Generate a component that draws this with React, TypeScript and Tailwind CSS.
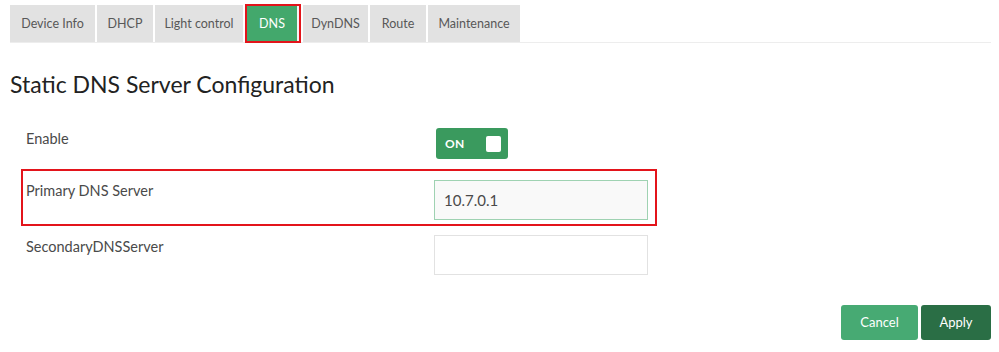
import { FC } from 'react';

const tabs = [
  { label: 'Device Info', w: 'w-[85px]' },
  { label: 'DHCP', w: 'w-[56px]' },
  { label: 'Light control', w: 'w-[88px]' },
  { label: 'DNS', w: 'w-[56px]', active: true },
  { label: 'DynDNS', w: 'w-[65px]' },
  { label: 'Route', w: 'w-[56px]' },
  { label: 'Maintenance', w: 'w-[92px]' },
];

const Tabs: FC = () => (
  <div className="flex gap-[2px] pt-[4px] border-b border-[#ededed] w-[981px]">
    {tabs.map((t) =>
      t.active ? (
        <div
          key={t.label}
          className={`${t.w} h-[39px] -mb-[1px] border-2 border-[#e3141b] flex`}
        >
          <div className="flex-1 bg-[#43a86c] border-r-2 border-[#f4f4f4] flex items-center justify-center pt-[2px] text-[12.5px] text-white">
            {t.label}
          </div>
        </div>
      ) : (
        <div
          key={t.label}
          className={`${t.w} h-[37px] mt-[1px] bg-[#e2e2e2] flex items-center justify-center pt-[2px] text-[12.5px] text-[#585858]`}
        >
          {t.label}
        </div>
      )
    )}
  </div>
);

const Toggle: FC = () => (
  <div className="w-[72px] h-[31px] rounded-[3px] bg-[#3a9a5e] flex items-center justify-between pl-[9px] pr-[7px]">
    <span className="text-[12px] font-bold text-white tracking-wide">ON</span>
    <span className="w-[15px] h-[16px] rounded-[2px] bg-white" />
  </div>
);

export default function App() {
  return (
    <div
      className="w-[999px] h-[352px] bg-white pl-[10px] overflow-hidden"
      style={{ fontFamily: 'Lato, "Open Sans", "Liberation Sans", sans-serif' }}
    >
      <Tabs />
      <h1 className="mt-[26px] text-[23px] leading-[30px] text-[#222]">
        Static DNS Server Configuration
      </h1>

      <div className="mt-[22px] flex flex-col">
        <div className="flex h-[44px] pl-[16px] pt-[7px]">
          <div className="w-[410px] text-[14.5px] text-[#4a4a4a]">Enable</div>
          <Toggle />
        </div>

        <div className="mt-[4px] ml-[11px] w-[636px] h-[57px] border-2 border-[#e3141b] flex pl-[3px] pt-[9px]">
          <div className="w-[408px] text-[14.5px] text-[#4a4a4a]">Primary DNS Server</div>
          <div className="w-[214px] h-[40px] border border-[#9fd2b2] bg-[#f9f9f9] flex items-center pl-[9px] text-[15px] text-[#4a4a4a]">
            10.7.0.1
          </div>
        </div>

        <div className="flex pl-[16px] pt-[9px]">
          <div className="w-[408px] text-[14.5px] text-[#4a4a4a] pt-[1px]">SecondaryDNSServer</div>
          <div className="w-[214px] h-[40px] border border-[#e2e2e2] bg-white" />
        </div>
      </div>

      <div className="flex justify-end gap-[3px] w-[981px] mt-[30px]">
        <button className="w-[77px] h-[35px] rounded-[3px] bg-[#47aa73] text-white text-[13px]">
          Cancel
        </button>
        <button className="w-[70px] h-[35px] rounded-[3px] bg-[#2a6e45] text-white text-[13px]">
          Apply
        </button>
      </div>
    </div>
  );
}
